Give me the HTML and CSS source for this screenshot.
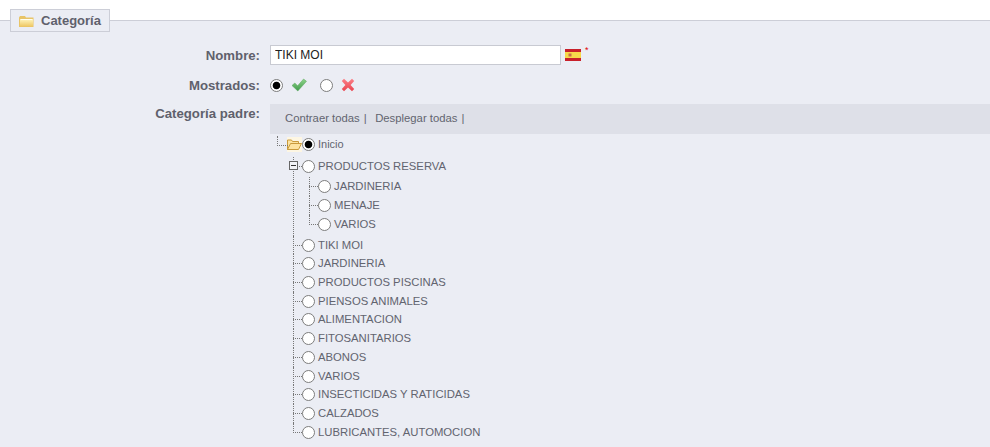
FILE: index.html
```html
<!DOCTYPE html>
<html lang="es">
<head>
<meta charset="utf-8">
<title>Categoría</title>
<link rel="stylesheet" href="styles.css">
</head>
<body>
<fieldset class="panel">
  <legend class="legend">
    <svg class="legend-icon" width="15" height="11" viewBox="0 0 15 11"><defs><linearGradient id="fold" x1="0" y1="0" x2="0" y2="1"><stop offset="0" stop-color="#fff6c0"/><stop offset="1" stop-color="#eec763"/></linearGradient></defs><path d="M0 1.5 1 0h5l1 1.5h7.500V11H0z" fill="#e8c468"/><path d="M1 3h13v7.500H1z" fill="url(#fold)"/><path d="M2 3.500h11" stroke="#fffdf0" stroke-width="1"/></svg>
    Categoría
  </legend>
  <div class="form-row row-name">
    <label class="form-label">Nombre:</label>
    <div class="form-field name-field">
      <input class="text-input" type="text" value="TIKI MOI">
      <svg class="flag" width="16" height="12" viewBox="0 0 16 12"><rect width="16" height="12" fill="#c8202a"/><rect y="3" width="16" height="6" fill="#f7d94a"/><rect x="3.500" y="4.500" width="3" height="3" fill="#c8704a"/></svg>
      <sup class="required">*</sup>
    </div>
  </div>
  <div class="form-row row-shown">
    <label class="form-label">Mostrados:</label>
    <div class="form-field shown-field">
      <input class="radio" type="radio" name="active" checked>
      <svg class="state-icon" width="16" height="14" viewBox="0 0 16 14"><defs><linearGradient id="ok" x1="0" y1="0" x2="0" y2="1"><stop offset="0" stop-color="#8fd58a"/><stop offset="1" stop-color="#3f9a4a"/></linearGradient></defs><path d="M1 7.500 3.800 5l2.800 2.800L12.600 1 15.500 3.300 6.800 13z" fill="url(#ok)" stroke="#5aa55c" stroke-width=".5"/></svg>
      <input class="radio radio-gap" type="radio" name="active">
      <svg class="state-icon" width="14" height="14" viewBox="0 0 14 14"><defs><linearGradient id="no" x1="0" y1="0" x2="0" y2="1"><stop offset="0" stop-color="#fb8088"/><stop offset="1" stop-color="#e9444f"/></linearGradient></defs><path d="M3 .8 7 4.400 11 .8l2.200 2.200-3.600 4 3.600 4-2.200 2.200-4-3.600-4 3.600L.8 11l3.600-4L.8 3z" fill="url(#no)"/></svg>
    </div>
  </div>
  <div class="form-row row-parent">
    <label class="form-label parent-label">Categoría padre:</label>
    <div class="tree-box">
      <div class="toolbar">
        <a class="tool-link">Contraer todas</a><span class="tool-sep">|</span>
        <a class="tool-link">Desplegar todas</a><span class="tool-sep">|</span>
      </div>
      <div class="root">
        <svg class="folder" width="15" height="15" viewBox="0 0 15 15"><rect width="15" height="15" fill="#fdf6e3"/><path d="M.5 4V3h4l1 1.500h6V7H4L.5 12.500z" fill="#fce3a0" stroke="#c99a3c"/><path d="M.5 12.500 3.500 6.500h11l-3 6z" fill="#fde3a0" stroke="#c99a3c"/></svg>
        <input class="radio" type="radio" name="parent" checked>
        <span class="root-text">Inicio</span>
      </div>
      <ul class="tree">
        <li class="item item-open"><span class="toggle"></span><input class="radio" type="radio" name="parent"><span>PRODUCTOS RESERVA</span>
          <ul class="subtree">
            <li class="sub"><input class="radio" type="radio" name="parent"><span>JARDINERIA</span></li>
            <li class="sub"><input class="radio" type="radio" name="parent"><span>MENAJE</span></li>
            <li class="sub"><input class="radio" type="radio" name="parent"><span>VARIOS</span></li>
          </ul>
        </li>
        <li class="item"><input class="radio" type="radio" name="parent"><span>TIKI MOI</span></li>
        <li class="item"><input class="radio" type="radio" name="parent"><span>JARDINERIA</span></li>
        <li class="item"><input class="radio" type="radio" name="parent"><span>PRODUCTOS PISCINAS</span></li>
        <li class="item"><input class="radio" type="radio" name="parent"><span>PIENSOS ANIMALES</span></li>
        <li class="item"><input class="radio" type="radio" name="parent"><span>ALIMENTACION</span></li>
        <li class="item"><input class="radio" type="radio" name="parent"><span>FITOSANITARIOS</span></li>
        <li class="item"><input class="radio" type="radio" name="parent"><span>ABONOS</span></li>
        <li class="item"><input class="radio" type="radio" name="parent"><span>VARIOS</span></li>
        <li class="item"><input class="radio" type="radio" name="parent"><span>INSECTICIDAS Y RATICIDAS</span></li>
        <li class="item"><input class="radio" type="radio" name="parent"><span>CALZADOS</span></li>
        <li class="item"><input class="radio" type="radio" name="parent"><span>LUBRICANTES, AUTOMOCION</span></li>
      </ul>
    </div>
  </div>
</fieldset>
</body>
</html>
```
FILE: styles.css
```css
* { box-sizing: border-box; }
html, body { margin: 0; padding: 0; height: 100%; overflow: hidden; background: #fff; }
body { font-family: "Liberation Sans", Arial, sans-serif; color: #62646f; font-size: 12px; }
.panel {
  margin: 9px 0 0;
  padding: 0;
  min-width: 0;
  border: 0;
  border-top: 1px solid #ccced7;
  background: #ebedf4;
  height: 438px;
  overflow: hidden;
}
.legend {
  margin-left: 10px;
  padding: 0 6px 0 8px;
  width: 100px;
  height: 23px;
  display: flex;
  align-items: center;
  gap: 7px;
  background: #ebedf4;
  border: 1px solid #ccced7;
  font-size: 13px;
  font-weight: bold;
  line-height: 21px;
  color: #5f616c;
}
.legend-icon { flex: none; margin-top: 1px; }
.form-row { display: flex; }
.form-label {
  width: 260px;
  flex: none;
  text-align: right;
  font-size: 13.2px;
  font-weight: bold;
  color: #5f616c;
}
.form-field { margin-left: 10px; display: flex; align-items: center; }
.row-name { margin-top: 13px; height: 20px; align-items: center; }
.text-input {
  width: 291px;
  height: 20px;
  padding: 0 4px;
  border: 1px solid #c8cad2;
  background: #fff;
  font: 12px "Liberation Sans", Arial, sans-serif;
  color: #222;
  outline: 0;
}
.flag { margin-left: 4px; }
.required { color: #e00000; font-size: 9px; line-height: 1; margin: -9px 0 0 4px; }
.row-shown { margin-top: 10px; height: 20px; align-items: center; }
.radio {
  appearance: none;
  flex: none;
  width: 13px;
  height: 13px;
  margin: 0;
  border: 1px solid #7d7d7d;
  border-radius: 50%;
  background: #fff;
}
.radio:checked { background: radial-gradient(circle, #000 0 3.4px, #fff 4.2px); }
.state-icon { margin-left: 8px; }
.radio-gap { margin-left: 13px; }
.row-parent { margin-top: 9px; }
.parent-label { margin-top: 2px; }
.tree-box { margin-left: 10px; flex: 1; min-width: 0; }
.toolbar {
  height: 30px;
  padding: 0 0 2px 15px;
  display: flex;
  align-items: center;
  background: #dee0e8;
  font-size: 11.3px;
}
.tool-sep { margin: 0 8.5px 0 4px; }
.root { position: relative; height: 19px; margin-top: 1px; padding-left: 17px; display: flex; align-items: center; font-size: 11px; }
.root::before { content: ""; position: absolute; left: 7px; top: 1px; width: 10px; height: 9px; border-left: 1px dotted #777; border-bottom: 1px dotted #777; }
.root-text { margin: -2px 0 0 3px; }
.tree, .subtree { list-style: none; margin: 0; padding: 0; }
.tree { margin-top: 2.9px; padding-left: 23px; position: relative; font-size: 11.3px; }
.item { position: relative; min-height: 18.7px; line-height: 18.7px; }
.item, .sub { padding-left: 9px; display: block; }
.item > input, .sub > input { vertical-align: -3px; margin-right: 3px; }
.item::before { content: ""; position: absolute; left: 0; top: 0; bottom: 0; border-left: 1px dotted #777; }
.item:last-child::before { bottom: auto; height: 10px; }
.item::after { content: ""; position: absolute; left: 0; top: 9px; width: 9px; border-top: 1px dotted #777; }
.item-open { padding-bottom: 2px; }
.toggle {
  position: absolute; left: -4px; top: 4px; z-index: 1;
  width: 9px; height: 9px; border: 1px solid #666; background: linear-gradient(#333,#333) center/5px 1px no-repeat #f2f3f7;
}
.subtree { margin-top: 1px; margin-left: 7px; }
.sub { position: relative; height: 19px; line-height: 19px; }
.sub::before { content: ""; position: absolute; left: 0; top: 0; bottom: 0; border-left: 1px dotted #777; }
.sub:last-child::before { bottom: 9px; }
.sub::after { content: ""; position: absolute; left: 0; top: 9px; width: 9px; border-top: 1px dotted #777; }
```
